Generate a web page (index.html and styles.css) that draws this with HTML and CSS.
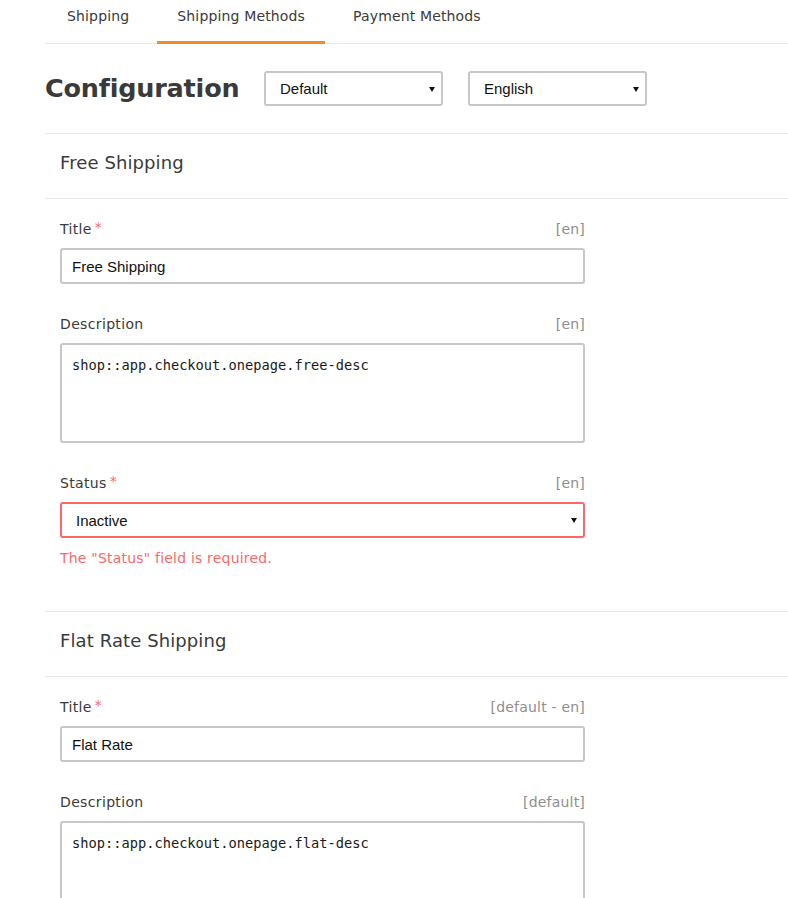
FILE: index.html
```html
<!DOCTYPE html>
<html lang="en">
<head>
<meta charset="utf-8">
<title>Configuration</title>
<link rel="stylesheet" href="styles.css">
</head>
<body>
<div class="content">
  <ul class="tabs">
    <li><a class="tab">Shipping</a></li>
    <li><a class="tab active">Shipping Methods</a></li>
    <li><a class="tab">Payment Methods</a></li>
  </ul>

  <div class="page-header">
    <h1 class="page-title">Configuration</h1>
    <span class="select-wrap small">
      <select class="control"><option>Default</option></select>
    </span>
    <span class="select-wrap small">
      <select class="control"><option>English</option></select>
    </span>
  </div>

  <section class="accordion">
    <div class="accordion-header">Free Shipping</div>
    <div class="accordion-body">
      <div class="control-group">
        <div class="label-row"><label class="required">Title</label><span class="locale">[en]</span></div>
        <input class="control" type="text" value="Free Shipping">
      </div>
      <div class="control-group">
        <div class="label-row"><label>Description</label><span class="locale">[en]</span></div>
        <textarea class="control textarea">shop::app.checkout.onepage.free-desc</textarea>
      </div>
      <div class="control-group has-error">
        <div class="label-row"><label class="required">Status</label><span class="locale">[en]</span></div>
        <span class="select-wrap">
          <select class="control"><option>Inactive</option></select>
        </span>
        <span class="control-error">The "Status" field is required.</span>
      </div>
    </div>
  </section>

  <section class="accordion">
    <div class="accordion-header">Flat Rate Shipping</div>
    <div class="accordion-body">
      <div class="control-group">
        <div class="label-row"><label class="required">Title</label><span class="locale">[default - en]</span></div>
        <input class="control" type="text" value="Flat Rate">
      </div>
      <div class="control-group">
        <div class="label-row"><label>Description</label><span class="locale">[default]</span></div>
        <textarea class="control textarea">shop::app.checkout.onepage.flat-desc</textarea>
      </div>
    </div>
  </section>
</div>
</body>
</html>
```

FILE: styles.css
```css
html, body {
  margin: 0;
  padding: 0;
  overflow: hidden;
  background: #ffffff;
}

body {
  font-family: "DejaVu Sans", "Open Sans", sans-serif;
  font-size: 14px;
  color: #3a3a3a;
}

.content {
  margin-left: 45px;
  width: 800px;
}

/* tabs */
.tabs {
  list-style: none;
  margin: 0;
  padding: 0 0 0 2px;
  display: flex;
  gap: 8px;
  border-bottom: 1px solid #e8e8e8;
  height: 43px;
}

.tab {
  display: block;
  padding: 0 20px;
  height: 41px;
  line-height: 32px;
  border-bottom: 3px solid transparent;
  color: #3a3a3a;
  font-size: 14px;
  letter-spacing: 0.15px;
  white-space: nowrap;
}

.tab.active {
  border-bottom-color: #f5892a;
}

/* header */
.page-header {
  display: flex;
  align-items: center;
  padding: 27px 0 27px;
  border-bottom: 1px solid #e8e8e8;
}

.page-title {
  margin: 0;
  width: 195px;
  margin-right: 24px;
  font-size: 25.5px;
  font-weight: 700;
  line-height: 35px;
  color: #3a3a3a;
  white-space: nowrap;
  letter-spacing: -0.2px;
}

.select-wrap {
  position: relative;
  display: inline-block;
  width: 525px;
}

.select-wrap.small {
  width: 179px;
  margin-right: 25px;
}

.select-wrap::after {
  content: "";
  position: absolute;
  right: 8px;
  top: 50%;
  margin-top: -2px;
  border-left: 3px solid transparent;
  border-right: 3px solid transparent;
  border-top: 5px solid #111111;
  pointer-events: none;
}

/* controls */
.control {
  box-sizing: border-box;
  display: block;
  width: 525px;
  height: 36px;
  margin: 0;
  padding: 0 10px;
  border: 2px solid #c7c7c7;
  border-radius: 3px;
  background: #ffffff;
  font-family: "Liberation Sans", Arial, sans-serif;
  font-size: 15px;
  color: #111111;
  outline: none;
}

select.control {
  -webkit-appearance: none;
  appearance: none;
  padding: 0 20px 0 14px;
  width: 100%;
  height: 35px;
}

.control.textarea {
  height: 100px;
  padding: 10px;
  resize: none;
  font-family: "DejaVu Sans Mono", "Liberation Mono", monospace;
  font-size: 13.7px;
  line-height: 20px;
  color: #1a1a1a;
}

/* accordion */
.accordion-header {
  padding: 17px 15px 23px;
  font-size: 18px;
  line-height: 24px;
  letter-spacing: 0.1px;
  color: #3a3a3a;
  border-bottom: 1px solid #e8e8e8;
}

.accordion-body {
  padding: 19px 15px 14px;
  border-bottom: 1px solid #e8e8e8;
}

.control-group {
  width: 525px;
  margin-bottom: 29px;
}

.label-row {
  display: flex;
  justify-content: space-between;
  align-items: baseline;
  line-height: 20px;
  padding-top: 1px;
  margin-bottom: 9px;
}

.label-row label {
  font-size: 14px;
  letter-spacing: 0.35px;
  color: #3a3a3a;
}

.label-row label.required::after {
  content: "*";
  color: #fc6868;
  margin-left: 3px;
  font-size: 14px;
  position: relative;
  top: -2px;
}

.locale {
  color: #8e8e8e;
  font-size: 14px;
  letter-spacing: 0.2px;
}

.has-error select.control {
  border-color: #fc6868;
  height: 36px;
}

.control-error {
  display: block;
  margin-top: 10px;
  line-height: 20px;
  color: #fc6868;
  font-size: 14px;
  letter-spacing: 0.2px;
}
```
